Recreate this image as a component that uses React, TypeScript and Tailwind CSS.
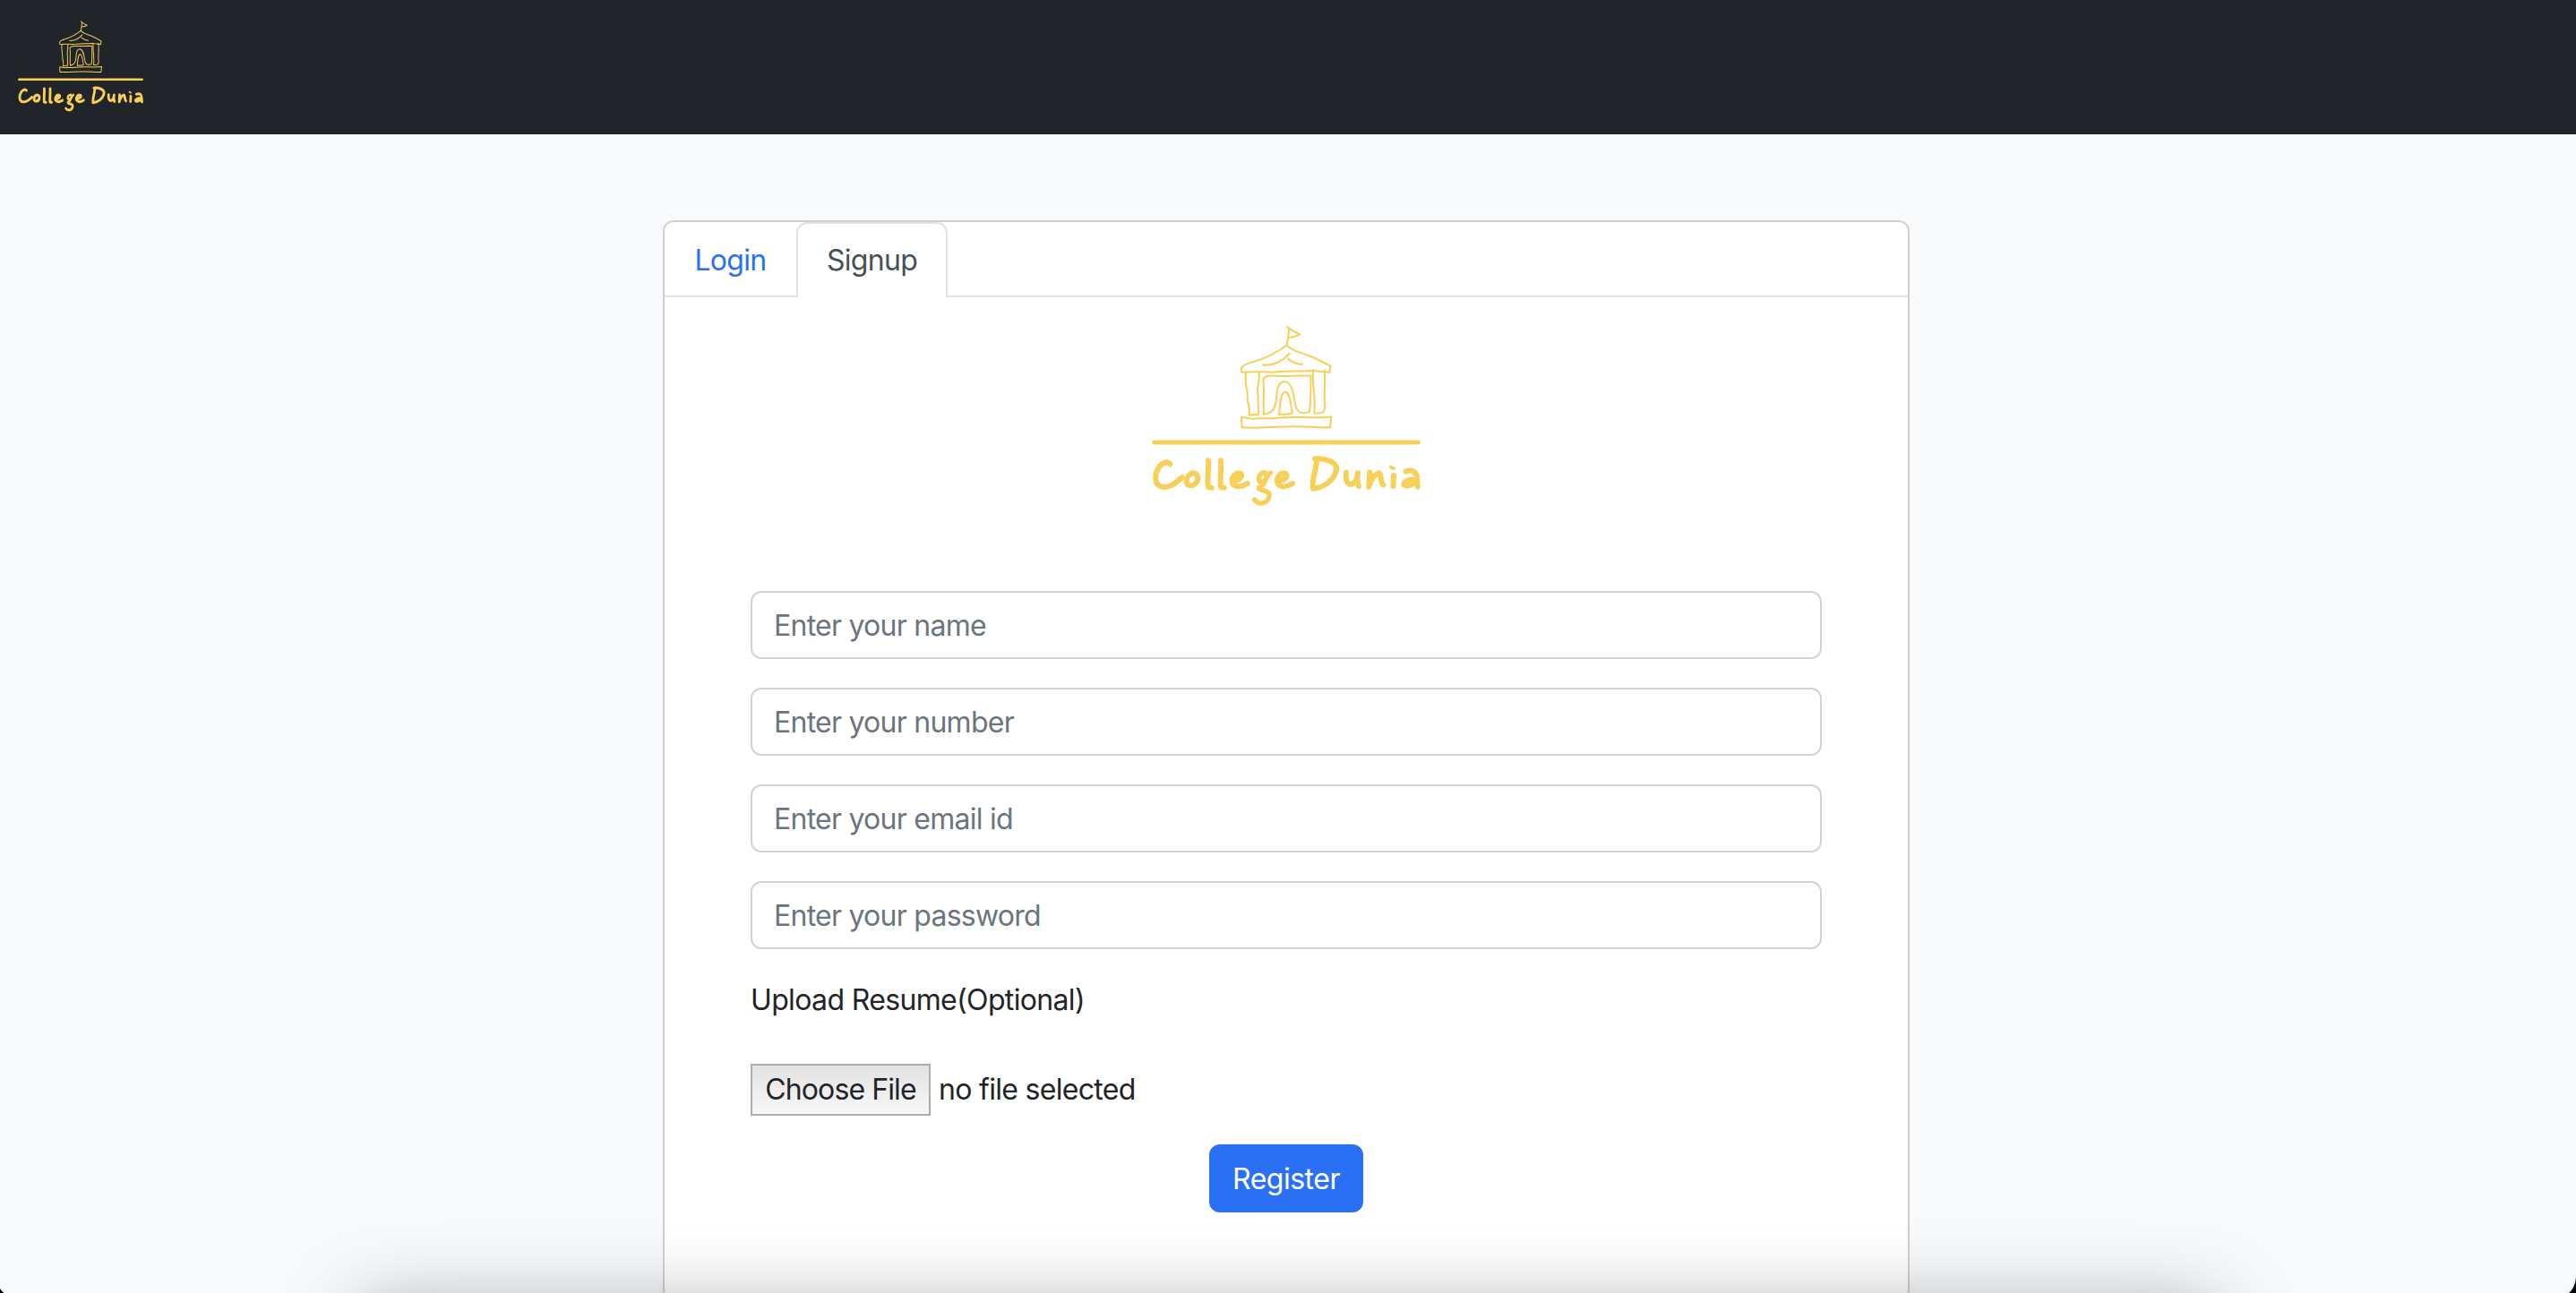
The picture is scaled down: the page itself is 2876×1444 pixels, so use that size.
import React from "react";

const COLOR = "#f9d057";

/* Hand-drawn pavilion with flag, underline and lettering strokes. */
function Logo({ className }: { className: string }) {
  return (
    <svg viewBox="78 68 900 608" preserveAspectRatio="none" className={className} fill="none" stroke={COLOR} strokeWidth={6} strokeLinecap="round" strokeLinejoin="round" aria-hidden="true">
      <path d="M531 74 L537 79 C549 88 562 94 574 99 C562 106 551 109 537 110 M537 79 C538 98 532 115 530 136" />
      <path d="M529 136 C495 161 461 179 415 192 C393 198 380 205 378 212 L378 225 L390 226 C430 221 458 227 491 225 C553 219 596 225 619 219 C635 227 653 220 673 227 L676 205 C644 188 606 168 568 158 C551 151 537 143 529 136Z" />
      <path d="M539 163 C517 187 490 204 450 202 M534 181 C549 194 563 199 582 200" />
      <path d="M393 228 C388 273 403 299 398 320 C403 339 409 349 403 370 C415 367 425 367 434 368 C437 347 432 327 434 303 C427 279 440 257 437 229" />
      <path d="M453 367 C450 327 456 287 451 253 C452 235 475 237 494 238 C534 240 570 235 611 238 C608 278 613 321 605 359 C577 367 565 361 559 336 C552 299 549 263 524 257 C493 257 498 300 492 334 C484 358 475 363 453 367Z" />
      <path d="M504 367 C508 328 510 291 526 292 C542 296 542 335 549 362 C538 370 526 365 504 367Z" />
      <path d="M618 222 C614 277 628 309 622 363 C653 364 657 360 658 340 C652 313 661 267 656 218" />
      <path d="M378 376 C401 378 415 386 432 380 C454 380 482 382 510 378 C552 373 609 379 649 377 L679 375 L675 410 C630 413 587 405 535 408 C489 407 435 415 380 410Z" />
      <path d="M86 460 H970" strokeWidth="15" />
      <g strokeWidth="18">
        <path d="M139 533 C129 521 111 530 101 545 C88 564 84 600 108 608 C137 617 160 593 179 578" />
        <path d="M216 563 C192 567 185 604 207 605 C233 604 244 567 216 563Z" />
        <path d="M267 521 C270 550 262 581 267 610 L278 612 M309 521 C312 550 305 581 309 610 L320 612" />
        <path d="M350 588 C369 588 384 576 376 565 C356 558 341 581 349 599 C362 614 384 607 398 598" />
        <path d="M457 562 C438 562 429 582 442 594 C460 591 467 577 458 564 M476 562 C463 570 458 589 450 603 M437 611 C432 625 478 618 471 641 C466 666 435 671 422 652" strokeWidth="16" />
        <path d="M501 588 C523 588 535 576 527 565 C507 558 492 581 500 599 C513 614 535 607 549 598" />
        <path d="M624 516 C655 511 694 527 697 546 C693 584 656 612 618 615 C611 590 628 555 630 524" />
        <path d="M729 561 C726 587 731 598 743 601 C762 598 767 580 768 563 C764 579 766 594 771 607" />
        <path d="M808 561 L805 609 C811 586 824 568 839 563 C849 574 843 593 853 603 M888 571 L886 607" />
        <path d="M878 543 L888 548" strokeWidth="11" />
        <path d="M929 558 C953 548 967 563 966 583 L968 609 M961 588 C939 580 922 594 922 602 C931 610 952 603 964 591" />
      </g>
    </svg>
  );
}

function Field({ placeholder, type = "text" }: { placeholder: string; type?: string }) {
  return (
    <input
      type={type}
      placeholder={placeholder}
      className="h-[76px] w-full rounded-xl border-2 border-[#ced4da] bg-white px-6 tracking-[-0.75px] placeholder:text-[#6c757d] placeholder:opacity-100"
    />
  );
}

export default function App() {
  return (
    <div className="relative flex h-[1444px] w-full flex-col overflow-hidden bg-[#f8f9fb] font-[Inter,sans-serif] text-[32px] leading-[48px] tracking-[-0.7px] text-[#212529]">
      <header className="flex h-[150px] shrink-0 items-start bg-[#212529] pt-[23px] pl-5">
        <Logo className="h-[102px] w-[140px]" />
      </header>
      <main className="flex shrink-0 justify-center pr-1 pt-24">
        <section className="h-[1206px] w-[1392px] shrink-0 rounded-xl border-2 border-[#cfd0d1] bg-white">
          <nav className="flex h-[84px] border-b-2 border-[#dee2e6]">
            <button className="w-[147px] pt-1 text-[#2a70f4]">Login</button>
            <button className="h-[84px] w-[169px] rounded-t-xl border-2 border-b-0 border-[#dee2e6] bg-white text-[#495057]">Signup</button>
          </nav>
          <div className="flex justify-center pt-[31px]">
            <Logo className="h-[203px] w-[300px]" />
          </div>
          <form className="flex flex-col px-24 pt-[94px]">
            <div className="flex flex-col gap-8">
              <Field placeholder="Enter your name" />
              <Field placeholder="Enter your number" />
              <Field placeholder="Enter your email id" />
              <Field placeholder="Enter your password" type="password" />
            </div>
            <label className="mt-[33px] tracking-[-0.65px]">Upload Resume(Optional)</label>
            <div className="mt-[47px] flex items-center gap-[9px]">
              <button type="button" className="h-[58px] w-[201px] border-2 border-[#adadad] bg-linear-to-b from-[#e2e2e2] to-[#f8f8f8] tracking-[-0.9px] whitespace-nowrap">Choose File</button>
              <span>no file selected</span>
            </div>
            <button type="button" className="mt-8 h-[76px] w-[172px] self-center rounded-xl bg-[#2a70f4] pt-px tracking-[-0.5px] text-white">Register</button>
          </form>
        </section>
      </main>

      {/* soft shadow rising from the bottom edge */}
      <div className="pointer-events-none absolute top-[1460px] left-[402px] h-[300px] w-[2072px] rounded-xl shadow-[0_0_84px_0_rgba(0,0,0,0.34)]" />

      {/* rounded window corners */}
      <svg viewBox="0 0 5 5" className="absolute bottom-0 left-0 size-[5px]" aria-hidden="true">
        <path d="M0 0 Q1.5 3 4.5 5 H0Z" fill="#000" />
      </svg>
      <svg viewBox="0 0 9 17" className="absolute right-0 bottom-0 h-[17px] w-[9px]" aria-hidden="true">
        <path d="M9 0 Q8 11 1 17 H9Z" fill="#05090f" />
      </svg>
    </div>
  );
}
